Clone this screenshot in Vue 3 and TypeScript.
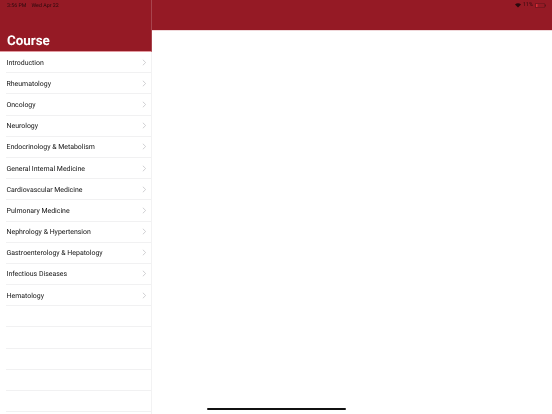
<script setup lang="ts">
const courses: string[] = [
  'Introduction', 'Rheumatology', 'Oncology', 'Neurology', 'Endocrinology & Metabolism',
  'General Internal Medicine', 'Cardiovascular Medicine', 'Pulmonary Medicine',
  'Nephrology & Hypertension', 'Gastroenterology & Hepatology', 'Infectious Diseases', 'Hematology',
  '', '', '', '', '', ''
]
</script>

<template>
  <div class="screen">
    <aside class="sidebar">
      <header class="head">
        <div class="status"><span>3:56 PM</span><span>Wed Apr 22</span></div>
        <h1>Course</h1>
      </header>
      <ul class="list">
        <li v-for="(c, i) in courses" :key="i" class="row">
          <span class="label">{{ c }}</span>
          <svg v-if="c" class="chev" viewBox="0 0 6 8" width="5" height="7">
            <path d="M1 .7 4.4 4 1 7.3" fill="none" stroke="#c6c6ca" stroke-width="1" />
          </svg>
        </li>
      </ul>
    </aside>
    <main class="detail">
      <div class="nav">
        <div class="sys">
          <svg viewBox="0 0 12 9" width="6" height="5"><path d="M6 8.600 0 2.600C3.400-.6 8.600-.6 12 2.600Z" fill="#2a0a0e" /></svg>
          <span>11%</span>
          <svg viewBox="0 0 22 10" width="11" height="5">
            <rect x=".5" y=".5" width="19" height="9" rx="2.500" fill="none" stroke="#4a1418" />
            <rect x="2" y="2" width="3" height="6" rx="1" fill="#e0303a" />
            <rect x="20.500" y="3.500" width="1.500" height="3" fill="#4a1418" />
          </svg>
        </div>
      </div>
      <div class="home"></div>
    </main>
  </div>
</template>

<style>
html, body { margin: 0; background: #fff; }
</style>

<style scoped>
.screen {
  display: flex;
  width: 552px;
  height: 414px;
  overflow: hidden;
  font-family: Roboto, "Liberation Sans", sans-serif;
  text-rendering: geometricPrecision;
  background: #fff;
}
.sidebar {
  width: 152px;
  flex: none;
  box-sizing: border-box;
  border-right: 1px solid #f2f2f3;
}
.head {
  height: 52px;
  box-sizing: border-box;
  background: #951a25;
  border-bottom: 1px solid #e39aa0;
  margin-right: -1px;
  border-right: 1px solid #a8444d;
  display: flex;
  flex-direction: column;
  justify-content: space-between;
}
.status {
  display: flex;
  gap: 5px;
  padding: 2.500px 0 0 7px;
  font-size: 5.300px;
  line-height: 6px;
  color: #2c0a0e;
  will-change: transform;
}
h1 {
  margin: 0;
  padding: 0 0 0.500px 7px;
  font-size: 13.400px;
  line-height: 18px;
  font-weight: 700;
  color: #fff;
  will-change: transform;
}
.list {
  list-style: none;
  margin: 0;
  padding: 0;
  will-change: transform;
}
.row {
  height: 21.190px;
  box-sizing: border-box;
  margin-left: 6px;
  padding: 0 4.500px 0 0.500px;
  display: flex;
  align-items: center;
  justify-content: space-between;
  border-bottom: 1px solid #f1f1f2;
}
.label {
  font-size: 6.950px;
  line-height: 9px;
  padding-top: 2px;
  color: #111;
}
.detail {
  flex: 1;
  position: relative;
}
.nav {
  height: 31px;
  background: #951a25;
  border-bottom: 1px solid #f0d8da;
  box-sizing: border-box;
  display: flex;
  justify-content: flex-end;
}
.sys {
  display: flex;
  align-items: center;
  gap: 2px;
  height: 10px;
  padding-right: 6px;
  font-size: 5.300px;
  color: #2c0a0e;
  will-change: transform;
}
.home {
  position: absolute;
  left: 54.500px;
  bottom: 4px;
  width: 139.500px;
  height: 2px;
  border-radius: 1px;
  background: #111;
}
</style>
